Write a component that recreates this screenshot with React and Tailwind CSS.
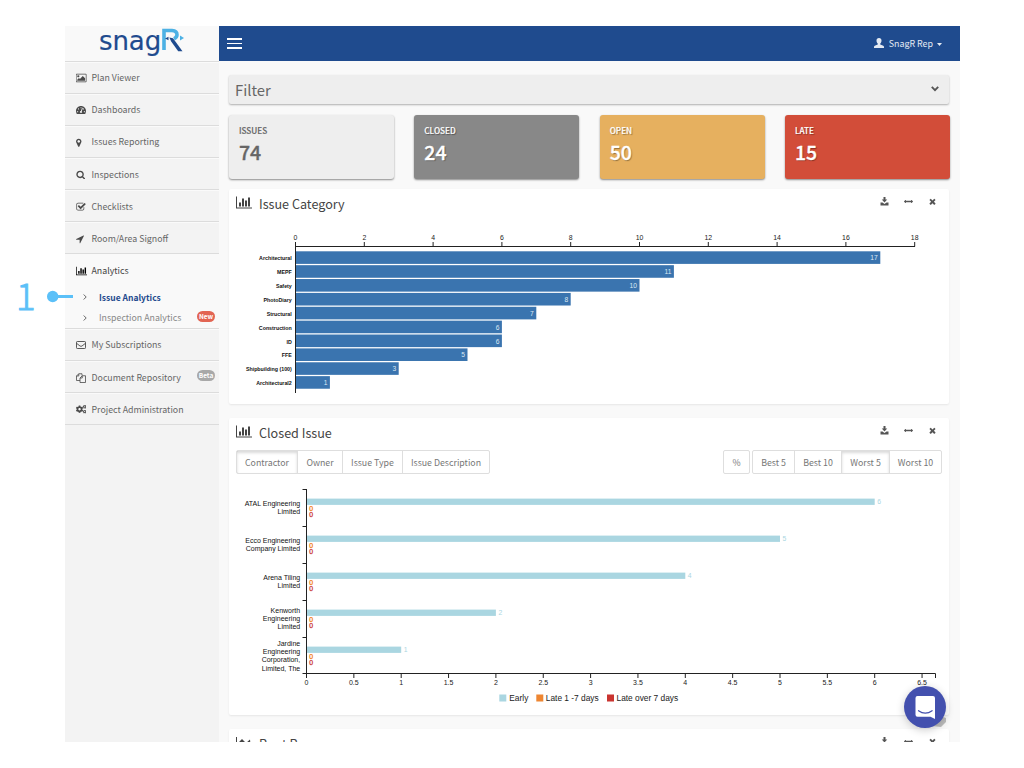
import React from 'react';
import { FaTachometerAlt, FaCogs } from 'react-icons/fa';

const PATHS = {
  picture: [1920, 'M576 576q0 80-56 136t-136 56-136-56-56-136 56-136 136-56 136 56 56 136zm1024 384v448h-1408v-192l320-320 160 160 512-512zm96-704h-1600q-13 0-22.5 9.5t-9.5 22.5v1216q0 13 9.5 22.5t22.5 9.5h1600q13 0 22.5-9.5t9.5-22.5v-1216q0-13-9.5-22.5t-22.5-9.5zm160 32v1216q0 66-47 113t-113 47h-1600q-66 0-113-47t-47-113v-1216q0-66 47-113t113-47h1600q66 0 113 47t47 113z'],
  marker: [1792, 'M1152 640q0-106-75-181t-181-75-181 75-75 181 75 181 181 75 181-75 75-181zm256 0q0 109-33 179l-364 774q-16 33-47.5 52t-67.5 19-67.5-19-46.5-52l-365-774q-33-70-33-179 0-212 150-362t362-150 362 150 150 362z'],
  search: [1792, 'M1216 832q0-185-131.5-316.5t-316.5-131.5-316.5 131.5-131.5 316.5 131.5 316.5 316.5 131.5 316.5-131.5 131.5-316.5zm512 832q0 52-38 90t-90 38q-54 0-90-38l-343-342q-179 124-399 124-143 0-273.5-55.5t-225-150-150-225-55.5-273.5 55.5-273.5 150-225 225-150 273.5-55.5 273.5 55.5 225 150 150 225 55.5 273.5q0 220-124 399l343 343q37 37 37 90z'],
  check: [1792, 'M1472 930v318q0 119-84.5 203.5t-203.5 84.5h-832q-119 0-203.5-84.5t-84.5-203.5v-832q0-119 84.5-203.5t203.5-84.5h832q63 0 117 25 15 7 18 23 3 17-9 29l-49 49q-10 10-23 10-3 0-9-2-23-6-45-6h-832q-66 0-113 47t-47 113v832q0 66 47 113t113 47h832q66 0 113-47t47-113v-254q0-13 9-22l64-64q10-10 23-10 6 0 12 3 20 8 20 29zm231-489l-814 814q-24 24-57 24t-57-24l-430-430q-24-24-24-57t24-57l110-110q24-24 57-24t57 24l263 263 647-647q24-24 57-24t57 24l110 110q24 24 24 57t-24 57z'],
  arrow: [1792, 'M1593 349l-640 1280q-17 35-57 35-5 0-15-2-22-5-35.5-22.5t-13.5-39.5v-576h-576q-22 0-39.5-13.5t-22.5-35.5 4-42 29-30l1280-640q13-7 29-7 27 0 45 19 15 14 18.5 34.5t-6.5 39.5z'],
  chart: [2048, 'M640 896v512h-256v-512h256zm384-512v1024h-256v-1024h256zm1024 1152v128h-2048v-1536h128v1408h1920zm-640-896v768h-256v-768h256zm384-384v1152h-256v-1152h256z'],
  resize: [1792, 'M1792 896q0 26-19 45l-256 256q-19 19-45 19t-45-19-19-45v-128h-1024v128q0 26-19 45t-45 19-45-19l-256-256q-19-19-19-45t19-45l256-256q19-19 45-19t45 19 19 45v128h1024v-128q0-26 19-45t45-19 45 19l256 256q19 19 19 45z'],
  close: [1792, 'M1490 1322q0 40-28 68l-136 136q-28 28-68 28t-68-28l-294-294-294 294q-28 28-68 28t-68-28l-136-136q-28-28-28-68t28-68l294-294-294-294q-28-28-28-68t28-68l136-136q28-28 68-28t68 28l294 294 294-294q28-28 68-28t68 28l136 136q28 28 28 68t-28 68l-294 294 294 294q28 28 28 68z'],
};

function Glyph({ name, className }) {
  const [w, d] = PATHS[name];
  return (
    <svg viewBox={`0 0 ${w} 1792`} className={className} fill="currentColor">
      <path d={d} />
    </svg>
  );
}

function Envelope() {
  return (
    <svg viewBox="0 0 20 16" className="h-[8px] w-[10px]" fill="none" stroke="currentColor" strokeWidth="1.8">
      <rect x="1" y="1" width="18" height="14" rx="1.5" />
      <path d="M1 4.5l7 5.5q2 1.3 4 0l7-5.5" />
    </svg>
  );
}

function Files() {
  return (
    <svg viewBox="0 0 20 20" className="h-[10px] w-[10px]" fill="none" stroke="currentColor" strokeWidth="1.6" strokeLinejoin="round">
      <path d="M8 15H1V6l4.500-4.500H12V5M5.500 1.500V6H1" />
      <path d="M8 10l4.500-4.500H19V19H8zM12.500 5.500V10H8" />
    </svg>
  );
}

function Download() {
  return (
    <svg viewBox="0 0 18 18" className="h-[9px] w-[9px]" fill="currentColor">
      <path d="M7 0h4v5h3.500L9 11 3.500 5H7z" />
      <path d="M1 11h4l4 3 4-3h4v6H1z" />
    </svg>
  );
}

const TOP = [
  ['Plan Viewer', <Glyph name="picture" className="h-[10px] w-[11px]" />],
  ['Dashboards', <FaTachometerAlt className="h-[10px] w-[10px]" />],
  ['Issues Reporting', <Glyph name="marker" className="-ml-[1.500px] h-[9.500px] w-[9.500px]" />],
  ['Inspections', <Glyph name="search" className="h-[9.500px] w-[9.500px]" />],
  ['Checklists', <Glyph name="check" className="h-[10px] w-[10px]" />],
  ['Room/Area Signoff', <Glyph name="arrow" className="-ml-[1px] h-[10px] w-[10px]" />],
];
const BOTTOM = [
  ['My Subscriptions', <Envelope />],
  ['Document Repository', <Files />, 'Beta'],
  ['Project Administration', <FaCogs className="h-[10.500px] w-[10.500px]" />],
];

function MenuItem({ label, icon, badge }) {
  return (
    <div className="flex h-[32.1px] items-center border-b border-[#dcdcdc] border-t border-t-[#fafafa] pt-[1.500px] pl-[10.500px] text-[#666]">
      <span className="flex w-[16px] items-center text-[#4a4a4a]">{icon}</span>
      <span className="text-[8.800px] leading-[14px]">{label}</span>
      {badge && <span className="mt-[-4px] mr-[4px] ml-auto flex h-[11px] w-[18px] items-center justify-center rounded-full bg-[#a8a8a8] text-[6.500px] leading-none font-bold text-white">{badge}</span>}
    </div>
  );
}

function Logo() {
  return (
    <div className="flex h-[35.500px] items-start border-b border-[#dcdcdc] bg-[#f9f9f9] pl-[34px]">
      <span className="mt-[-5px] font-['DejaVu_Sans',sans-serif] text-[26px] leading-[40px] tracking-[-0.1px] text-[#1f4b8e] [-webkit-text-stroke:0.2px_currentColor]">snag</span>
      <svg width="24" height="26" viewBox="0 0 24 26" className="mt-[1px]">
        <path d="M3 23V3.500H11q5 .3 5 4.300 0 2.500-3 4" fill="none" stroke="#4db1e4" strokeWidth="3.600" />
        <path d="M4 11.500l3.500-1.700v3.400z" fill="#1f4b8e" />
        <path d="M8.300 10.500l3.700.7 9.500 13h-4.300l-7-9.700z" fill="#1f4b8e" />
        <path d="M19 8.500l4 2.500-4 2.500z" fill="#4db1e4" />
      </svg>
    </div>
  );
}

function Sidebar() {
  return (
    <aside className="w-[154px] shrink-0 bg-[#f3f3f3]">
      <Logo />
      {TOP.map(([l, i]) => <MenuItem key={l} label={l} icon={i} />)}
      <div className="h-[74.600px] border-b border-[#dcdcdc] bg-[#f9f9f9] pt-[1px]">
        <div className="flex h-[32px] items-center pl-[10.500px] text-[#444]">
          <span className="flex w-[16px] items-center text-black"><Glyph name="chart" className="h-[10px] w-[11.500px]" /></span>
          <span className="text-[8.800px] leading-[14px]">Analytics</span>
        </div>
        <div className="flex h-[19px] items-center pl-[18px] text-[#1f4b8e]">
          <Angle />
          <span className="text-[8.500px] leading-[14px] font-bold">Issue Analytics</span>
        </div>
        <div className="mt-[1px] flex h-[21px] items-center pl-[18px] text-[#888]">
          <Angle />
          <span className="text-[8.800px] leading-[14px]">Inspection Analytics</span>
          <span className="mt-[-3px] mr-[4px] ml-auto flex h-[11px] w-[18px] items-center justify-center rounded-full bg-[#e26553] text-[6.500px] leading-none font-bold text-white">New</span>
        </div>
      </div>
      {BOTTOM.map(([l, i, b]) => <MenuItem key={l} label={l} icon={i} badge={b} />)}
    </aside>
  );
}

function Angle() {
  return (
    <span className="flex w-[16px] items-center">
      <svg viewBox="0 0 4 6" className="h-[6px] w-[4px]" fill="none" stroke="#555" strokeWidth="0.9"><path d="M.7.5L3.200 3 .7 5.500" /></svg>
    </span>
  );
}

function Header() {
  return (
    <header className="flex h-[35px] shrink-0 items-center bg-[#1f4b8e] pr-[18px] pl-[8px] text-[#e4eaf3]">
      <div className="flex w-[15px] flex-col gap-[3px]">
        <span className="h-[1.500px] bg-white" />
        <span className="h-[1.500px] bg-white" />
        <span className="h-[1.500px] bg-white" />
      </div>
      <svg viewBox="0 0 20 20" className="mt-[-2px] ml-auto h-[10px] w-[10px]" fill="currentColor">
        <path d="M10 0c3.300 0 5 2 5 5.200 0 2.600-1 4.700-2.500 5.800v2l6 2.600c1 .5 1.500 1.200 1.500 2.200V20H0v-2.200c0-1 .5-1.700 1.500-2.200l6-2.600v-2C6 9.900 5 7.800 5 5.200 5 2 6.700 0 10 0z" />
      </svg>
      <span className="ml-[5px] text-[8.900px] leading-[14px]">SnagR Rep</span>
      <svg viewBox="0 0 5 3" className="mt-[2px] ml-[4px] h-[3px] w-[5px]" fill="currentColor"><path d="M0 0h5L2.500 3z" /></svg>
    </header>
  );
}

const STATS = [
  ['ISSUES', '74', 'bg-[#eee] text-[#666]'],
  ['CLOSED', '24', 'bg-[#888] text-white [text-shadow:1px_1px_1px_rgba(0,0,0,0.4)]'],
  ['OPEN', '50', 'bg-[#e6b05f] text-white [text-shadow:1px_1px_1px_rgba(0,0,0,0.35)]'],
  ['LATE', '15', 'bg-[#d24d39] text-white [text-shadow:1px_1px_1px_rgba(0,0,0,0.35)]'],
];

function PanelHeader({ title, icon }) {
  return (
    <div className="flex h-[30px] shrink-0 items-center pr-[12.500px] pl-[7px] text-[#444]">
      {icon || <Glyph name="chart" className="mt-[-3px] h-[15px] w-[16px]" />}
      <span className="ml-[7px] text-[12.600px] leading-[18px]">{title}</span>
      <div className="mt-[-5px] ml-auto flex items-center gap-[15px] text-[#555]">
        <Download />
        <Glyph name="resize" className="h-[9px] w-[9px]" />
        <Glyph name="close" className="h-[9px] w-[9px]" />
      </div>
    </div>
  );
}

const CATEGORIES = [
  ['Architectural', 17], ['MEPF', 11], ['Safety', 10], ['PhotoDiary', 8], ['Structural', 7],
  ['Construction', 6], ['ID', 6], ['FFE', 5], ['Shipbuilding (100)', 3], ['Architectural2', 1],
];

function CategoryChart() {
  return (
    <svg width="720" height="185" viewBox="229 219 720 185" className="shrink-0 font-['Liberation_Sans',sans-serif]">
      {CATEGORIES.map(([name, v], i) => {
        const y = 251.300 + i * 13.870;
        return (
          <g key={name}>
            <rect x="296" y={y} width={v * 34.400 - 0.5} height="12.600" fill="#3a74af" />
            <text x="291.800" y={y + 9} fontSize="5.300" fontWeight="bold" textAnchor="end" fill="#111">{name}</text>
            <text x={293 + v * 34.400} y={y + 9} fontSize="6.700" textAnchor="end" fill="#dce8f4">{v}</text>
          </g>
        );
      })}
      <path d="M295.500 246V393M295.500 246.500H915" stroke="#222" fill="none" />
      {[0, 2, 4, 6, 8, 10, 12, 14, 16, 18].map((t) => (
        <g key={t}>
          <path d={`M${295.500 + t * 34.400} 242v4.500`} stroke="#222" />
          <text x={295.500 + t * 34.400} y="240" fontSize="6.900" textAnchor="middle" fill="#222">{t}</text>
        </g>
      ))}
    </svg>
  );
}

const COMPANIES = [
  [['ATAL Engineering', 'Limited'], 6, 506, 8],
  [['Ecco Engineering', 'Company Limited'], 5, 543.400, 7.600],
  [['Arena Tiling', 'Limited'], 4, 580.400, 7.600],
  [['Kenworth', 'Engineering', 'Limited'], 2, 613.200, 8],
  [['Jardine', 'Engineering', 'Corporation,', 'Limited, The'], 1, 646.200, 8.100],
];

function ClosedChart() {
  const ticks = Array.from({ length: 14 }, (_, i) => i / 2);
  return (
    <svg width="720" height="241" viewBox="229 474 720 241" className="shrink-0 font-['Liberation_Sans',sans-serif]">
      {COMPANIES.map(([lines, v, base, step], i) => {
        const y = 498.600 + i * 37;
        return (
          <g key={lines[0]}>
            {lines.map((l, k) => <text key={l} x="300.200" y={base + k * step} fontSize="7" textAnchor="end" fill="#111">{l}</text>)}
            <rect x="307" y={y} width={v * 94.700 - 0.5} height="6.300" fill="#aad6e1" />
            <text x={309 + v * 94.700} y={y + 5.800} fontSize="6.800" fill="#aad6e1">{v}</text>
            <text x="309.300" y={y + 12.200} fontSize="6.900" fill="#f07a10" stroke="#f07a10" strokeWidth="0.25">0</text>
            <text x="309.300" y={y + 18.600} fontSize="6.900" fill="#c93430" stroke="#c93430" strokeWidth="0.25">0</text>
            <path d={`M302.500 ${489.500 + i * 37}h4`} stroke="#222" />
          </g>
        );
      })}
      <path d="M306.500 489V674M302.500 673.500H935.500V678" stroke="#222" fill="none" />
      {ticks.map((t) => (
        <g key={t}>
          <path d={`M${306.500 + t * 94.700} 673.500v4.500`} stroke="#222" />
          <text x={306.500 + t * 94.700} y="685.300" fontSize="7" textAnchor="middle" fill="#222">{t}</text>
        </g>
      ))}
      <g fontSize="8.350" fill="#222">
        <rect x="499.300" y="694.500" width="7" height="7" fill="#aad6e1" />
        <text x="509.300" y="700.700">Early</text>
        <rect x="536.300" y="694.500" width="7" height="7" fill="#ee8632" />
        <text x="545.800" y="700.700">Late 1 -7 days</text>
        <rect x="607" y="694.500" width="7" height="7" fill="#c93430" />
        <text x="616.500" y="700.700">Late over 7 days</text>
      </g>
    </svg>
  );
}

function Tab({ w, active, children }) {
  return (
    <div className={`flex h-full items-center justify-center border-r border-[#dedede] pt-[1px] text-[8.800px] leading-[14px] text-[#777] last:border-r-0 ${w} ${active ? 'shadow-[inset_0_2px_3px_rgba(0,0,0,0.15)]' : ''}`}>
      {children}
    </div>
  );
}

const GROUP = 'flex h-[24px] rounded-[2px] border border-[#dedede] bg-white';
const PANEL = 'flex w-[720px] shrink-0 flex-col rounded-[2px] bg-white shadow-[0_1px_2px_rgba(0,0,0,0.08)]';

export default function App() {
  return (
    <div className="relative h-[768px] w-[1024px] overflow-hidden bg-white pt-[26px] pl-[65px] font-['Noto_Sans_CJK_SC','Source_Sans_Pro',sans-serif]">
      <div className="flex h-[716px] w-[895px] overflow-hidden">
        <Sidebar />
        <div className="flex min-w-0 flex-1 flex-col bg-[#f9f9f9]">
          <Header />
          <main className="flex flex-col pt-[14px] pl-[10px]">
            <div className="flex h-[29px] w-[720px] shrink-0 items-center rounded-[2px] bg-[#eee] pr-[10px] pl-[6px] text-[#666] shadow-[0_1px_2px_rgba(0,0,0,0.3)]">
              <span className="text-[14.800px] leading-[20px]">Filter</span>
              <svg viewBox="0 0 8 6" className="mt-[-1px] ml-auto h-[6px] w-[8px]" fill="none" stroke="#555" strokeWidth="1.900"><path d="M.8.9L4 4.100 7.200.9" /></svg>
            </div>
            <div className="mt-[11px] flex w-[721px] shrink-0 justify-between">
              {STATS.map(([label, n, c]) => (
                <div key={label} className={`flex h-[64px] w-[165px] flex-col rounded-[3px] pt-[8px] pl-[10px] shadow-[0_1px_2px_rgba(0,0,0,0.45)] ${c}`}>
                  <span className="text-[8.200px] leading-[14px] font-medium [-webkit-text-stroke:0.15px_currentColor]">{label}</span>
                  <span className="mt-[3px] text-[19.500px] leading-[24px] font-medium [-webkit-text-stroke:0.3px_currentColor]">{n}</span>
                </div>
              ))}
            </div>
            <section className={`mt-[10px] ${PANEL}`}>
              <PanelHeader title="Issue Category" />
              <CategoryChart />
            </section>
            <section className={`mt-[14px] ${PANEL}`}>
              <PanelHeader title="Closed Issue" />
              <div className="mt-[2px] flex h-[24px] shrink-0 px-[7px]">
                <div className={GROUP}>
                  <Tab w="w-[61px]" active>Contractor</Tab>
                  <Tab w="w-[45px]">Owner</Tab>
                  <Tab w="w-[60px]">Issue Type</Tab>
                  <Tab w="w-[86px]">Issue Description</Tab>
                </div>
                <div className={`ml-auto ${GROUP}`}><Tab w="w-[25px]">%</Tab></div>
                <div className={`ml-[2px] ${GROUP}`}>
                  <Tab w="w-[42px]">Best 5</Tab>
                  <Tab w="w-[47px]">Best 10</Tab>
                  <Tab w="w-[48px]" active>Worst 5</Tab>
                  <Tab w="w-[51px]">Worst 10</Tab>
                </div>
              </div>
              <ClosedChart />
            </section>
            <section className={`mt-[14px] ${PANEL}`}>
              <PanelHeader
                title="Root Reason"
                icon={(
                  <svg viewBox="0 0 16 14" className="mt-[-1px] h-[14px] w-[16px]" fill="currentColor">
                    <path d="M0 0h1v13h15v1H0z" />
                    <path d="M2 12V6l4-4 4 4 4-3.500 1 9.500z" />
                  </svg>
                )}
              />
            </section>
          </main>
        </div>
      </div>
      <div className="absolute top-[273px] left-[16px] text-[36.500px] leading-[43px] font-light text-[#5bc0f8] [-webkit-text-stroke:0.9px_currentColor]">1</div>
      <svg className="absolute top-[290px] left-[46px]" width="28" height="13" viewBox="0 0 28 13">
        <circle cx="6.700" cy="6.500" r="5.700" fill="#5bc0f8" />
        <path d="M7 6.500h20" stroke="#5bc0f8" strokeWidth="3" />
      </svg>
      <svg className="absolute top-[710px] left-[930px]" width="18" height="18" viewBox="0 0 18 18">
        <path d="M8 5l8 3v4l-5 5-9-1z" fill="#bdbdbd" />
      </svg>
      <div className="absolute top-[686px] left-[904px] flex h-[42px] w-[42px] items-center justify-center rounded-full bg-[#4350ae] shadow-[0_2px_8px_rgba(0,0,0,0.2)]">
        <svg width="21" height="23" viewBox="0 0 21 23">
          <path d="M2.500 0h15.500q2 0 2 2v21l-4.500-2.300H2.500q-2 0-2-2V2q0-2 2-2z" fill="#fff" />
          <path d="M3.500 14.700q6.800 5 13.600 0" fill="none" stroke="#4350ae" strokeWidth="1.200" strokeLinecap="round" />
        </svg>
      </div>
    </div>
  );
}
